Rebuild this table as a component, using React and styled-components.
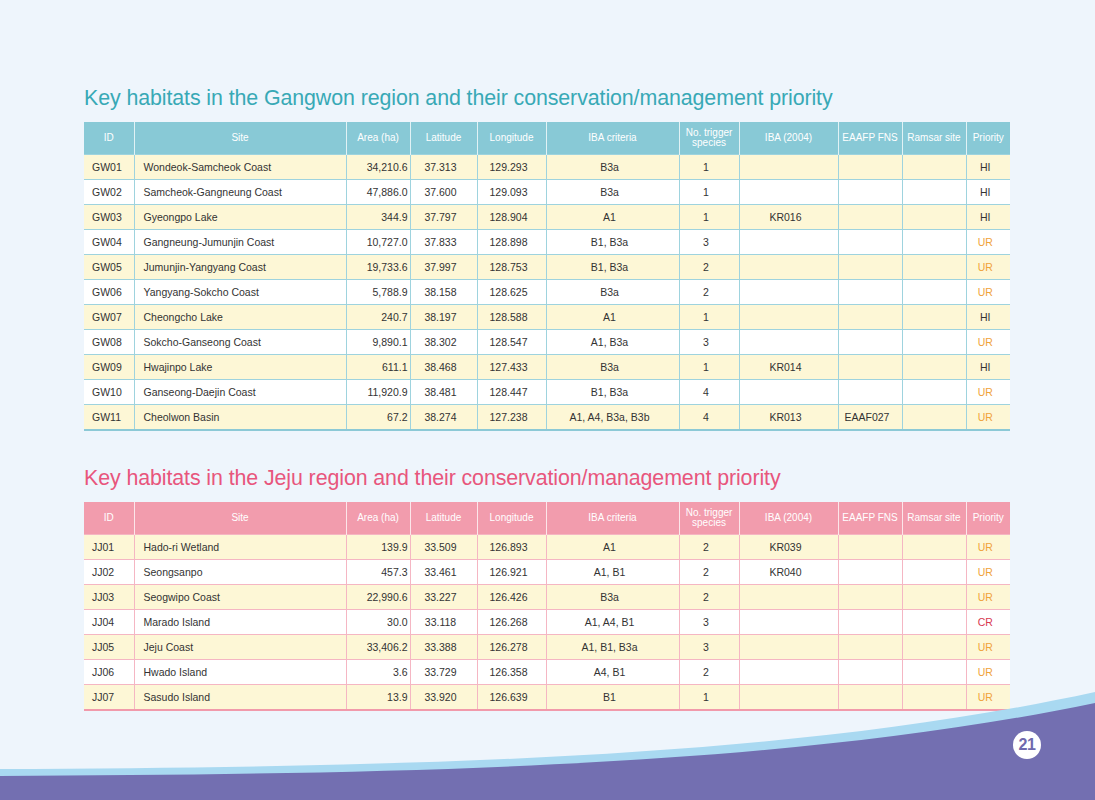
import React from 'react'
import styled, { createGlobalStyle } from 'styled-components'

const GlobalStyle = createGlobalStyle`
  html, body {
    margin: 0;
    padding: 0;
    background: #eef5fc;
  }
`

const tones = {
  teal: {
    title: '#38a9b6',
    head: '#88c9d6',
    line: '#9ed3de',
    bottom: '#8cc9d6',
  },
  pink: {
    title: '#e8567c',
    head: '#f29cad',
    line: '#f5b6c3',
    bottom: '#f19aab',
  },
}

const Page = styled.div`
  position: relative;
  width: 1095px;
  height: 800px;
  overflow: hidden;
  background: #eef5fc;
  font-family: "Liberation Sans", Arial, sans-serif;
`

const Content = styled.div`
  display: flex;
  flex-direction: column;
  padding: 85px 0 0 84px;
`

const Section = styled.section`
  display: flex;
  flex-direction: column;
  margin-bottom: 34px;
`

const Title = styled.h2`
  margin: 0 0 10px 0;
  font-size: 21.4px;
  font-weight: 400;
  line-height: 27px;
  letter-spacing: -0.1px;
  color: ${p => tones[p.$tone].title};
`

const Table = styled.table`
  width: 926px;
  table-layout: fixed;
  border-collapse: collapse;
  font-size: 10.5px;
  color: #333;
  border-bottom: 2px solid ${p => tones[p.$tone].bottom};
`

const Th = styled.th`
  height: 32px;
  padding: 0 2px;
  background: ${p => tones[p.$tone].head};
  color: #fff;
  font-weight: 400;
  font-size: 10px;
  line-height: 10px;
  text-align: center;
  border-left: 1px solid rgba(255, 255, 255, 0.75);
  &:first-child {
    border-left: none;
  }
`

const Tr = styled.tr`
  background: ${p => (p.$odd ? '#fdf7d6' : '#ffffff')};
`

const Td = styled.td`
  height: 24px;
  padding: 0 ${p => (p.$align === 'right' ? '2px' : '8px')} 0 ${p => (p.$align === 'left' ? '9px' : '2px')};
  text-align: ${p => p.$align || 'center'};
  white-space: nowrap;
  border-top: 1px solid ${p => tones[p.$tone].line};
  border-left: 1px solid ${p => tones[p.$tone].line};
  color: ${p => p.$color || '#333'};
  &:first-child {
    border-left: none;
    padding-left: 8px;
  }
`

const Wave = styled.svg`
  position: absolute;
  left: 0;
  bottom: 0;
  display: block;
`

const PageNumber = styled.div`
  position: absolute;
  left: 1013px;
  top: 731px;
  width: 28px;
  height: 28px;
  border-radius: 50%;
  background: #fff;
  display: flex;
  align-items: center;
  justify-content: center;
  color: #6f69ad;
  font-weight: 700;
  font-size: 16px;
  letter-spacing: -0.5px;
`

const widths = [50, 212, 64, 67, 69, 133, 60, 99, 64, 64, 44]

const headers = [
  'ID',
  'Site',
  'Area (ha)',
  'Latitude',
  'Longitude',
  'IBA criteria',
  <>No. trigger<br />species</>,
  'IBA (2004)',
  'EAAFP FNS',
  'Ramsar site',
  'Priority',
]

const aligns = ['left', 'left', 'right', 'center', 'center', 'center', 'center', 'center', 'center', 'center', 'center']

const priorityColor = { HI: '#333', UR: '#f0a23a', CR: '#d8394f' }

const gangwon = [
  ['GW01', 'Wondeok-Samcheok Coast', '34,210.6', '37.313', '129.293', 'B3a', '1', '', '', '', 'HI'],
  ['GW02', 'Samcheok-Gangneung Coast', '47,886.0', '37.600', '129.093', 'B3a', '1', '', '', '', 'HI'],
  ['GW03', 'Gyeongpo Lake', '344.9', '37.797', '128.904', 'A1', '1', 'KR016', '', '', 'HI'],
  ['GW04', 'Gangneung-Jumunjin Coast', '10,727.0', '37.833', '128.898', 'B1, B3a', '3', '', '', '', 'UR'],
  ['GW05', 'Jumunjin-Yangyang Coast', '19,733.6', '37.997', '128.753', 'B1, B3a', '2', '', '', '', 'UR'],
  ['GW06', 'Yangyang-Sokcho Coast', '5,788.9', '38.158', '128.625', 'B3a', '2', '', '', '', 'UR'],
  ['GW07', 'Cheongcho Lake', '240.7', '38.197', '128.588', 'A1', '1', '', '', '', 'HI'],
  ['GW08', 'Sokcho-Ganseong Coast', '9,890.1', '38.302', '128.547', 'A1, B3a', '3', '', '', '', 'UR'],
  ['GW09', 'Hwajinpo Lake', '611.1', '38.468', '127.433', 'B3a', '1', 'KR014', '', '', 'HI'],
  ['GW10', 'Ganseong-Daejin Coast', '11,920.9', '38.481', '128.447', 'B1, B3a', '4', '', '', '', 'UR'],
  ['GW11', 'Cheolwon Basin', '67.2', '38.274', '127.238', 'A1, A4, B3a, B3b', '4', 'KR013', 'EAAF027', '', 'UR'],
]

const jeju = [
  ['JJ01', 'Hado-ri Wetland', '139.9', '33.509', '126.893', 'A1', '2', 'KR039', '', '', 'UR'],
  ['JJ02', 'Seongsanpo', '457.3', '33.461', '126.921', 'A1, B1', '2', 'KR040', '', '', 'UR'],
  ['JJ03', 'Seogwipo Coast', '22,990.6', '33.227', '126.426', 'B3a', '2', '', '', '', 'UR'],
  ['JJ04', 'Marado Island', '30.0', '33.118', '126.268', 'A1, A4, B1', '3', '', '', '', 'CR'],
  ['JJ05', 'Jeju Coast', '33,406.2', '33.388', '126.278', 'A1, B1, B3a', '3', '', '', '', 'UR'],
  ['JJ06', 'Hwado Island', '3.6', '33.729', '126.358', 'A4, B1', '2', '', '', '', 'UR'],
  ['JJ07', 'Sasudo Island', '13.9', '33.920', '126.639', 'B1', '1', '', '', '', 'UR'],
]

const HabitatTable = ({ tone, title, rows }) => (
  <Section>
    <Title $tone={tone}>{title}</Title>
    <Table $tone={tone}>
      <colgroup>
        {widths.map((w, i) => <col key={i} style={{ width: w }} />)}
      </colgroup>
      <thead>
        <tr>
          {headers.map((h, i) => <Th key={i} $tone={tone}>{h}</Th>)}
        </tr>
      </thead>
      <tbody>
        {rows.map((row, r) => (
          <Tr key={row[0]} $odd={r % 2 === 0}>
            {row.map((cell, c) => (
              <Td
                key={c}
                $tone={tone}
                $align={aligns[c]}
                $color={c === 10 ? priorityColor[cell] : undefined}
              >
                {cell}
              </Td>
            ))}
          </Tr>
        ))}
      </tbody>
    </Table>
  </Section>
)

const App = () => {
  return (
    <Page>
      <GlobalStyle />
      <Content>
        <HabitatTable
          tone="teal"
          title="Key habitats in the Gangwon region and their conservation/management priority"
          rows={gangwon}
        />
        <HabitatTable
          tone="pink"
          title="Key habitats in the Jeju region and their conservation/management priority"
          rows={jeju}
        />
      </Content>
      <Wave width="1095" height="110" viewBox="0 0 1095 110">
        <path d="M0,79 C450,77 800,66 1095,2 L1095,110 L0,110 Z" fill="#a9d9f1" />
        <path d="M0,86 C450,84 800,74 1095,13 L1095,110 L0,110 Z" fill="#736fb1" />
      </Wave>
      <PageNumber>21</PageNumber>
    </Page>
  )
}

export default App
